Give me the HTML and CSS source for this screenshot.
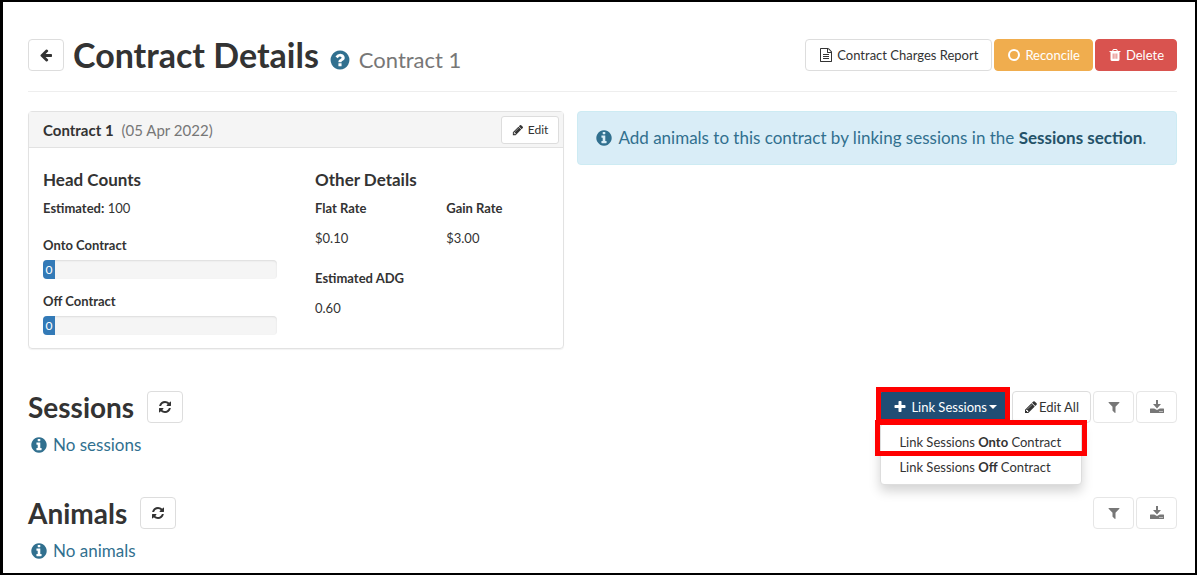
FILE: index.html
```html
<!DOCTYPE html>
<html lang="en">
<head>
	<meta charset="UTF-8">
	<title>Contract Details</title>
	<link rel="stylesheet" href="styles.css">
</head>
<body>
	<svg class="sprite" aria-hidden="true">
		<symbol id="arrow-left" viewBox="0 0 1792 1792"><path d="M1664 896v128q0 53-32.500 90.500t-84.500 37.500h-704l293 294q38 36 38 90t-38 90l-75 76q-37 37-90 37-52 0-91-37l-651-652q-37-37-37-90 0-52 37-91l651-650q38-38 91-38 52 0 90 38l75 74q38 38 38 91t-38 91l-293 293h704q52 0 84.500 37.500t32.500 90.500z"/></symbol>
		<symbol id="info" viewBox="0 0 1792 1792"><path d="M1152 1376v-160q0-14-9-23t-23-9h-96v-512q0-14-9-23t-23-9h-320q-14 0-23 9t-9 23v160q0 14 9 23t23 9h96v320h-96q-14 0-23 9t-9 23v160q0 14 9 23t23 9h448q14 0 23-9t9-23zm-128-896v-160q0-14-9-23t-23-9h-192q-14 0-23 9t-9 23v160q0 14 9 23t23 9h192q14 0 23-9t9-23zm640 416q0 209-103 385.500t-279.500 279.500-385.500 103-385.500-103-279.500-279.500-103-385.500 103-385.500 279.500-279.500 385.500-103 385.500 103 279.500 279.500 103 385.500z"/></symbol>
		<symbol id="question" viewBox="0 0 1792 1792"><path d="M1024 1376v-192q0-14-9-23t-23-9h-192q-14 0-23 9t-9 23v192q0 14 9 23t23 9h192q14 0 23-9t9-23zm256-672q0-88-55.500-163t-138.500-116-170-41q-243 0-371 213-15 24 8 42l132 100q7 6 19 6 16 0 25-12 53-68 86-92 34-24 86-24 48 0 85.500 26t37.500 59q0 38-20 61t-68 45q-63 28-115.500 86.500t-52.500 125.500v36q0 14 9 23t23 9h192q14 0 23-9t9-23q0-19 21.500-49.500t54.500-49.500q32-18 49-28.500t46-35 44.500-48 28-60.500 12.500-81zm384 192q0 209-103 385.500t-279.500 279.500-385.500 103-385.500-103-279.500-279.500-103-385.500 103-385.500 279.500-279.500 385.500-103 385.500 103 279.500 279.500 103 385.500z"/></symbol>
		<symbol id="refresh" viewBox="0 0 1792 1792"><path d="M1639 1056q0 5-1 7-64 268-268 434.500t-478 166.500q-146 0-282.500-55t-243.500-157l-129 129q-19 19-45 19t-45-19-19-45v-448q0-26 19-45t45-19h448q26 0 45 19t19 45-19 45l-137 137q71 66 161 102t187 36q134 0 250-65t186-179q11-17 53-117 8-23 30-23h192q13 0 22.500 9.500t9.500 22.500zm25-800v448q0 26-19 45t-45 19h-448q-26 0-45-19t-19-45 19-45l138-138q-148-137-349-137-134 0-250 65t-186 179q-11 17-53 117-8 23-30 23h-199q-13 0-22.500-9.500t-9.500-22.500v-7q65-268 270-434.500t480-166.500q146 0 284 55.500t245 156.500l130-129q19-19 45-19t45 19 19 45z"/></symbol>
		<symbol id="plus" viewBox="0 0 1792 1792"><path d="M1600 736v192q0 40-28 68t-68 28h-416v416q0 40-28 68t-68 28h-192q-40 0-68-28t-28-68v-416h-416q-40 0-68-28t-28-68v-192q0-40 28-68t68-28h416v-416q0-40 28-68t68-28h192q40 0 68 28t28 68v416h416q40 0 68 28t28 68z"/></symbol>
		<symbol id="pencil" viewBox="0 0 1792 1792"><path d="M491 1536l91-91-235-235-91 91v107h128v128h107zm523-928q0-22-22-22-10 0-17 7l-542 542q-7 7-7 17 0 22 22 22 10 0 17-7l542-542q7-7 7-17zm-54-192l416 416-832 832h-416v-416zm683 96q0 53-37 90l-166 166-416-416 166-165q36-38 90-38 53 0 91 38l235 234q37 39 37 91z"/></symbol>
		<symbol id="filter" viewBox="0 0 1792 1792"><path d="M1595 295q17 41-14 70l-493 493v742q0 42-39 59-13 5-25 5-27 0-45-19l-256-256q-19-19-19-45v-486l-493-493q-31-29-14-70 17-39 59-39h1280q42 0 59 39z"/></symbol>
		<symbol id="download" viewBox="0 0 14 14"><path fill-rule="evenodd" d="M6 0h2v4h3L7 8.500 3 4h3zM.5 8.500h3.700l2.800 1.500L9.800 8.500h3.700q.5 0 .5.500v3.500q0 .5-.5.500H.5q-.5 0-.5-.500v-3.500Q0 8.500 .5 8.500zM9.500 11v1h1v-1zm2 0v1h1v-1z"/></symbol>
		<symbol id="file" viewBox="0 0 1792 1792"><path d="M1596 380q28 28 48 76t20 88v1152q0 40-28 68t-68 28h-1344q-40 0-68-28t-28-68v-1600q0-40 28-68t68-28h896q40 0 88 20t76 48zm-444-244v376h376q-10-29-22-41l-313-313q-12-12-41-22zm384 1528v-1024h-416q-40 0-68-28t-28-68v-416h-768v1536h1280zM512 768h768v128h-768zM512 1024h768v128h-768zM512 1280h768v128h-768z"/></symbol>
		<symbol id="circle" viewBox="0 0 14 14"><circle cx="7" cy="7" r="5" fill="none" stroke="currentColor" stroke-width="2"/></symbol>
		<symbol id="trash" viewBox="0 0 1792 1792"><path fill-rule="evenodd" d="M608 704h96v672h-96zM848 704h96v672h-96zM1088 704h96v672h-96zM672 384h448l-48-117q-7-9-17-11h-317q-10 2-17 11zm928 32v64q0 14-9 23t-23 9h-96v948q0 83-47 143.500t-113 60.500h-832q-66 0-113-58.500t-47-141.500v-952h-96q-14 0-23-9t-9-23v-64q0-14 9-23t23-9h309l70-167q15-37 54-63t79-26h320q40 0 79 26t54 63l70 167h309q14 0 23 9t9 23z"/></symbol>
	</svg>

	<div class="page">
		<header class="page-header">
			<button class="btn btn-icon" type="button" aria-label="Back"><svg class="icon"><use href="#arrow-left"/></svg></button>
			<h1 class="page-title">Contract Details</h1>
			<a class="help" href="#" aria-label="Help"><svg class="icon icon-help"><use href="#question"/></svg></a>
			<span class="subtitle">Contract 1</span>
			<div class="actions">
				<button class="btn btn-report" type="button"><svg class="icon"><use href="#file"/></svg>Contract Charges Report</button>
				<button class="btn btn-warning" type="button"><svg class="icon"><use href="#circle"/></svg>Reconcile</button>
				<button class="btn btn-danger" type="button"><svg class="icon"><use href="#trash"/></svg>Delete</button>
			</div>
		</header>

		<div class="row">
			<div class="panel">
				<div class="panel-heading">
					<b>Contract 1</b>
					<span class="muted">(05 Apr 2022)</span>
					<button class="btn btn-sm" type="button"><svg class="icon"><use href="#pencil"/></svg>Edit</button>
				</div>
				<div class="panel-body">
					<div class="counts">
						<h4>Head Counts</h4>
						<p><b>Estimated:</b> 100</p>
						<p class="label">Onto Contract</p>
						<div class="progress"><div class="progress-bar">0</div></div>
						<p class="label">Off Contract</p>
						<div class="progress"><div class="progress-bar">0</div></div>
					</div>
					<div class="details">
						<h4>Other Details</h4>
						<dl>
							<div>
								<dt>Flat Rate</dt>
								<dd>$0.10</dd>
							</div>
							<div>
								<dt>Gain Rate</dt>
								<dd>$3.00</dd>
							</div>
							<div>
								<dt>Estimated ADG</dt>
								<dd>0.60</dd>
							</div>
						</dl>
					</div>
				</div>
			</div>
			<div class="alert">
				<svg class="icon icon-info"><use href="#info"/></svg>
				<span>Add animals to this contract by linking sessions in the <a href="#sessions">Sessions section</a>.</span>
			</div>
		</div>

		<section class="section" id="sessions">
			<div class="section-header">
				<h2>Sessions</h2>
				<button class="btn btn-icon" type="button" aria-label="Refresh sessions"><svg class="icon"><use href="#refresh"/></svg></button>
				<div class="actions">
					<div class="dropdown">
						<button class="btn btn-primary marked" type="button"><svg class="icon"><use href="#plus"/></svg>Link Sessions<span class="caret"></span></button>
						<ul class="dropdown-menu">
							<li class="marked"><a href="#">Link Sessions <b>Onto</b> Contract</a></li>
							<li><a href="#">Link Sessions <b>Off</b> Contract</a></li>
						</ul>
					</div>
					<button class="btn btn-edit" type="button"><svg class="icon"><use href="#pencil"/></svg>Edit All</button>
					<button class="btn btn-tool" type="button" aria-label="Filter sessions"><svg class="icon"><use href="#filter"/></svg></button>
					<button class="btn btn-tool" type="button" aria-label="Download sessions"><svg class="icon"><use href="#download"/></svg></button>
				</div>
			</div>
			<p class="empty"><svg class="icon icon-info"><use href="#info"/></svg>No sessions</p>
		</section>

		<section class="section">
			<div class="section-header">
				<h2>Animals</h2>
				<button class="btn btn-icon" type="button" aria-label="Refresh animals"><svg class="icon"><use href="#refresh"/></svg></button>
				<div class="actions">
					<button class="btn btn-tool" type="button" aria-label="Filter animals"><svg class="icon"><use href="#filter"/></svg></button>
					<button class="btn btn-tool" type="button" aria-label="Download animals"><svg class="icon"><use href="#download"/></svg></button>
				</div>
			</div>
			<p class="empty"><svg class="icon icon-info"><use href="#info"/></svg>No animals</p>
		</section>
	</div>
</body>
</html>
```
FILE: styles.css
```css
*{
	box-sizing:border-box;
}
body,h1,h2,h4,p,ul,dl,dd{
	margin:0;
	padding:0;
}
body{
	font-family:Lato,"Liberation Sans",sans-serif;
	font-size:13px;
	line-height:20px;
	color:#333;
	background:#fff;
}
.sprite{
	display:none;
}
.page{
	min-height:100vh;
	padding:36px 18px 0 25px;
	border:2px solid #000;
	border-left-width:3px;
}
.icon{
	width:14px;
	height:14px;
	fill:currentColor;
	flex:none;
}
.icon-info{
	width:18px;
	height:18px;
}
.icon-help{
	width:22px;
	height:22px;
	display:block;
}

/* buttons */
.btn{
	display:flex;
	align-items:center;
	justify-content:center;
	gap:4px;
	height:32px;
	padding:0 12px;
	font-family:inherit;
	font-size:13px;
	color:#333;
	white-space:nowrap;
	background:#fff;
	border:1px solid #ddd;
	border-radius:4px;
}
.btn-icon{
	width:36px;
	padding:0;
}
.btn-tool{
	width:41px;
	padding:0;
	color:#777;
	border-color:#e6e6e6;
}
.btn-report{
	padding:0 13px;
}
.btn-sm{
	height:28px;
	padding:0 10px;
	font-size:12px;
	border-radius:3px;
}
.btn-sm .icon{
	width:12px;
	height:12px;
}
.btn-warning{
	color:#fff;
	background:#f0ad4e;
	border-color:#f0ad4e;
}
.btn-danger{
	color:#fff;
	background:#d9534f;
	border-color:#d9534f;
}
.btn-primary{
	color:#fff;
	background:#204d74;
	border-color:#204d74;
}
.btn-edit{
	gap:1px;
	padding:0 11px;
}
.caret{
	margin-left:-2px;
	border-top:4px solid;
	border-left:4px solid transparent;
	border-right:4px solid transparent;
}
.actions{
	display:flex;
	gap:2px;
	margin-left:auto;
}

/* header */
.page-header{
	display:flex;
	align-items:center;
	height:54px;
	padding-bottom:20px;
	border-bottom:1px solid #eee;
}
.page-title{
	margin-left:9px;
	font-size:34px;
	line-height:32px;
}
.help{
	margin:10px 8px 0 10px;
	color:#31708f;
}
.subtitle{
	margin-top:10px;
	font-size:22px;
	color:#777;
}

/* panel and alert */
.row{
	display:grid;
	grid-template-columns:17fr 19fr;
	align-items:start;
	gap:13px;
	margin-top:19px;
}
.panel{
	border:1px solid #e2e2e2;
	border-radius:4px;
	box-shadow:0 1px 1px rgba(0,0,0,.05);
}
.panel-heading{
	display:flex;
	align-items:center;
	gap:8px;
	height:36px;
	padding:0 4px 0 14px;
	font-size:15px;
	background:#f5f5f5;
	border-bottom:1px solid #e2e2e2;
}
.panel-heading .btn{
	margin-left:auto;
}
.muted{
	color:#777;
}
.panel-body{
	display:grid;
	grid-template-columns:234px 1fr;
	gap:38px;
	padding:22px 14px 13px;
}
h4{
	margin-bottom:8px;
	font-size:17px;
	line-height:20px;
}
.label{
	margin:17px 0 5px;
	font-weight:bold;
}
.progress + .label{
	margin-top:12px;
}
.progress{
	height:19px;
	overflow:hidden;
	background:#f5f5f5;
	border-radius:4px;
	box-shadow:inset 0 1px 2px rgba(0,0,0,.1);
}
.progress-bar{
	width:12px;
	height:19px;
	font-size:12px;
	line-height:19px;
	text-align:center;
	color:#fff;
	background:#337ab7;
}
dl{
	display:grid;
	grid-template-columns:1fr 1fr;
	gap:20px 28px;
}
dt{
	font-weight:bold;
	margin-bottom:10px;
}
.alert{
	display:flex;
	align-items:center;
	gap:5px;
	padding:16px 17px;
	font-size:17px;
	color:#31708f;
	background:#d9edf7;
	border:1px solid #cdebf3;
	border-radius:4px;
}
.alert a{
	font-weight:bold;
	color:#245269;
	text-decoration:none;
}

/* sessions and animals */
.section{
	margin-top:42px;
}
.section-header{
	display:flex;
	align-items:center;
	gap:13px;
}
h2{
	font-size:28px;
	line-height:32px;
}
.empty{
	display:flex;
	align-items:center;
	gap:5px;
	margin-top:12px;
	padding-left:2px;
	font-size:17px;
	color:#31708f;
}
.dropdown{
	position:relative;
}
.dropdown-menu{
	position:absolute;
	top:100%;
	left:0;
	z-index:1;
	min-width:202px;
	padding:6px 0 4px;
	list-style:none;
	white-space:nowrap;
	background:#fff;
	border:1px solid #ddd;
	border-radius:4px;
	box-shadow:0 6px 12px rgba(0,0,0,.175);
}
.dropdown-menu a{
	display:block;
	padding:2px 18px 3px;
	color:#333;
	text-decoration:none;
}

/* red boxes round the link controls */
.marked{
	position:relative;
}
.marked::after{
	content:"";
	position:absolute;
	inset:-5px -1px -2px -5px;
	border:5px solid #f00;
}
li.marked::after{
	inset:-10px -6px -1px -6px;
}
```
